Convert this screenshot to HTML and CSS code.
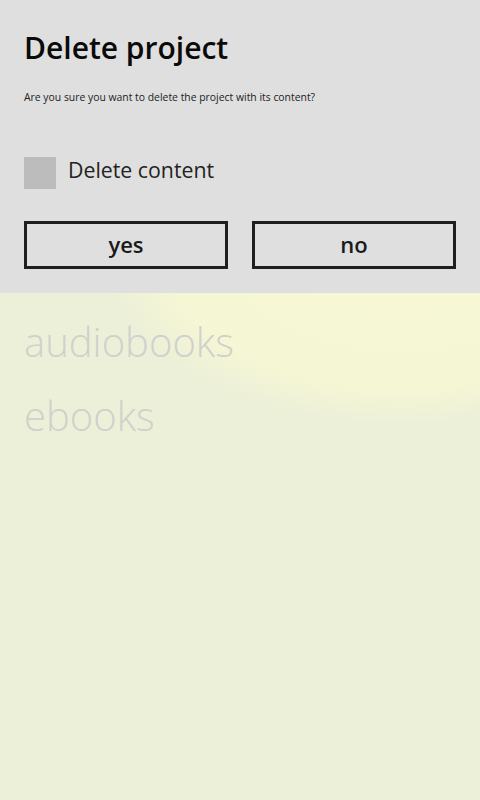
FILE: index.html
```html
<!DOCTYPE html>
<html lang="en">
<head>
    <meta charset="UTF-8">
    <meta name="viewport" content="width=device-width, initial-scale=1.0">
    <title>Delete project</title>
    <link rel="stylesheet" href="styles.css">
</head>
<body>
    <div class="dialog">
        <h1>Delete project</h1>
        <p class="message">Are you sure you want to delete the project with its content?</p>

        <label class="check">
            <span class="box"></span>
            <span class="check-text">Delete content</span>
        </label>

        <div class="buttons">
            <button>yes</button>
            <button>no</button>
        </div>
    </div>

    <div class="list">
        <div class="item">audiobooks</div>
        <div class="item">ebooks</div>
    </div>
</body>
</html>
```

FILE: styles.css
```css
html, body {
    height: 100%;
}

body {
    font-family: 'Open Sans', 'Noto Sans', sans-serif;
    margin: 0;
    padding: 0;
    background-color: #ecf0d8;
    background-image: radial-gradient(ellipse 300px 180px at 400px 245px, #f8f8d6 0%, #f5f6d4 80%, #ecf0d8 100%);
    color: #111;
}

.dialog {
    background: #dfdfdf;
    height: 293px;
    box-sizing: border-box;
    padding: 28px 24px 0;
}

h1 {
    margin: 0;
    font-size: 30px;
    font-weight: 600;
    line-height: 40px;
    color: #0a0a0a;
}

.message {
    margin: 21px 0 0;
    font-size: 10.4px;
    line-height: 16px;
    color: #222;
}

.check {
    display: flex;
    align-items: center;
    gap: 12px;
    margin-top: 52px;
}

.box {
    width: 32px;
    height: 32px;
    background: #bdbcbd;
}

.check-text {
    font-size: 21.3px;
    color: #222;
    line-height: 26px;
    padding-bottom: 6px;
}

.buttons {
    display: flex;
    gap: 24px;
    margin-top: 32px;
}

button {
    flex: 1;
    height: 48px;
    background: transparent;
    border: 3px solid #1e1e1e;
    font-family: inherit;
    font-size: 22px;
    font-weight: 600;
    color: #1a1a1a;
    padding: 0 0 2px;
}

.list {
    padding: 12px 24px 0;
}

.item {
    font-size: 40px;
    font-weight: 300;
    color: #d0d0cc;
    line-height: 74px;
}
```
